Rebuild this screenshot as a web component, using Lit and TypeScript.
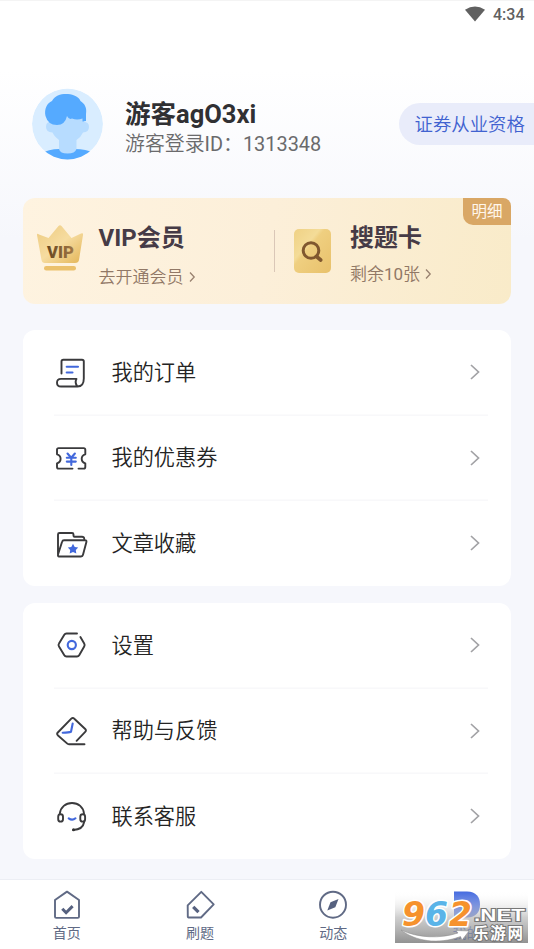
import { LitElement, html, css } from "lit";
import { customElement } from "lit/decorators.js";

const icons: Record<string, unknown> = {
  order: html`<svg viewBox="0 0 34 34"><g class="ink"><path d="M6.500 18.500V6.500q0-1.800 1.800-1.800H27q1.800 0 1.800 1.800V23.500q0 8-6.300 8H6q-4 0-4-3.800t4-3.800H21.500q-2 3.800 .8 7.400"/></g><g class="accent"><path d="M11.700 11.700H23M11.700 17.500h5.800"/></g></svg>`,
  coupon: html`<svg viewBox="0 0 34 34"><g class="ink"><path d="M17.500 27.600H3.600q-1.600 0-1.600-1.600V22.300q3.600-1 3.600-4.500t-3.600-4.500V8.700q0-1.600 1.600-1.600H28.700q1.600 0 1.600 1.600v4.600q-3.600 1-3.600 4.500t3.600 4.500V26q0 1.600-1.600 1.600h-5.200"/></g><g class="accent"><path d="M12.500 12.500l3.700 4.200 3.700-4.200M11.800 16.800h9M11.800 20.600h9M16.300 16.800v7.200"/></g></svg>`,
  folder: html`<svg viewBox="0 0 34 34"><g class="ink"><path d="M3 28.500V8.500q0-1.500 1.500-1.500H17q1.500 0 1.500 1.500v1.200q0 1 1 1h7.500q2 0 2.200 1.800M3 28.500L7 16q.5-1.700 2-1.700H30q1.800 0 1.400 1.600L28 28.800q-.4 1.700-2 1.700H4q-1.200 0-1-2"/></g><path fill="#4268dc" d="M18 17.800l1.700 3.100 3.500.6-2.400 2.500.5 3.500-3.300-1.600-3.300 1.600.5-3.500-2.400-2.500 3.500-.6z"/></svg>`,
  settings: html`<svg viewBox="0 0 34 34"><g class="ink"><path d="M22 5.500H11.500q-1.500 0-2.200 1.200L4 15.500q-1 1.500 0 3L9.300 27.300q.7 1.200 2.200 1.200H22q1.500 0 2.200-1.200l5-8.800q.9-1.500 0-3l-3.800-6.500"/></g><circle class="accent" cx="16.800" cy="17" r="4.100"/></svg>`,
  help: html`<svg viewBox="0 0 34 34"><g class="ink"><path d="M29.500 30.200H14q-1.200 0-2-.8L3 21.500q-1.700-1.400-.2-3L16.300 4.700q1.500-1.500 3 0L30.200 15q1.500 1.400 0 2.900l-8.600 8.900"/></g><path class="accent" d="M17.700 9.500L16 17.800q-2 .8-8.300 1"/></svg>`,
  service: html`<svg viewBox="0 0 34 34"><g class="ink"><path d="M4.800 14.500C5.700 8.200 10.500 4 17 4S28.300 8.200 29 14.500M29.300 22.500c-1 5.800-5.300 8.300-11 8.500"/><rect x="3.200" y="15.300" width="4.800" height="7.300" rx="2.400"/><rect x="25.300" y="15.300" width="4.800" height="7.300" rx="2.400"/></g><circle cx="18.500" cy="30.700" r="1.500" fill="#333"/><path class="accent" d="M13.700 19.300q3.500 2.700 6.800 0"/></svg>`,
  home: html`<svg viewBox="0 0 34 34"><g class="tab"><path d="M17 4.600L29 13V29.700q0 1.200-1.200 1.200H6.200q-1.200 0-1.200-1.200V13z"/></g><path d="M12.300 21.700l3.800 4 6.500-6.600" fill="none" stroke="#56617f" stroke-width="3"/></svg>`,
  quiz: html`<svg viewBox="0 0 34 34"><g class="tab"><path d="M4.700 18.400L18.300 4.800l12.400 12.500L18 30.500H5.600q-.8 0-.8-1z"/></g><path d="M10.200 19.800l5.300 5.400" fill="none" stroke="#56617f" stroke-width="3.200"/></svg>`,
  feed: html`<svg viewBox="0 0 34 34"><circle class="tab" cx="17" cy="17.700" r="13"/><path fill="#56617f" d="M22.500 12l-3.200 8.200-8 3.300 3.200-8.200z"/></svg>`,
  mine: html`<svg viewBox="0 0 34 34"><path fill="#4268df" d="M4 4.500H17C26 4.500 30 10 30 17.500S26 30.500 17 30.500H4z"/></svg>`,
};

const chevron = html`<svg class="chev" viewBox="0 0 12 18"><path d="M2 2l7.500 7L2 16" fill="none" stroke="#a2a2a5" stroke-width="1.700"/></svg>`;
const smallChevron = html`<svg class="small" viewBox="0 0 8 12"><path d="M2 1.500l4.200 4.500L2 10.500" fill="none" stroke="#98816f" stroke-width="1.300"/></svg>`;

@customElement("app-root")
export class AppRoot extends LitElement {
  static styles = css`
    :host {
      display: flex; flex-direction: column; position: relative; box-sizing: border-box;
      width: 534px; height: 949px; overflow: hidden; color: #303033;
      background: linear-gradient(#fff 0, #fff 70px, #f6f7fc 240px);
      font-family: Roboto, "Noto Sans CJK SC", sans-serif;
    }
    svg { display: block; flex: none; overflow: visible; }
    .ink, .accent, .tab { fill: none; stroke-linecap: round; stroke-linejoin: round; }
    .ink { stroke: #3a3a3c; stroke-width: 1.900; }
    .accent { stroke: #4268dc; stroke-width: 2.100; }
    .tab { stroke: #606a85; stroke-width: 1.900; }
    .status { height: 28px; display: flex; justify-content: flex-end; align-items: center; padding-right: 9.500px; gap: 8px; font-size: 16px; font-weight: 500; color: #606060; flex: none; box-sizing: border-box; border-top: 1px solid #f4f4f4; }
    .wifi { width: 20px; height: 16px; margin-top: -2px; }
    .profile { height: 170px; flex: none; display: flex; align-items: flex-start; padding: 60px 0 0 32px; box-sizing: border-box; }
    .avatar { width: 71px; height: 72px; margin-left: -.5px; }
    .who { margin: 11px 0 0 22.500px; flex: 1; white-space: nowrap; }
    .name { font-size: 25.500px; line-height: 30px; font-weight: 700; color: #303033; }
    .uid { font-size: 19.900px; line-height: 31px; color: #6a6a6c; font-weight: 350; }
    .uid b, .sub b { font-weight: 400; }
    .pill { width: 135px; height: 42px; margin-top: 15px; box-sizing: border-box; padding-left: 15.500px; border-radius: 21px 0 0 21px; background: #e9ecfa; color: #4062d0; font-size: 18.400px; line-height: 43px; white-space: nowrap; font-weight: 350; }
    .vip { position: relative; flex: none; height: 106px; margin: 0 23px; display: flex; border-radius: 12px; background: linear-gradient(100deg, #fef3e0, #fcefd9 50%, #f9ebc9); }
    .half { display: flex; flex: none; width: 250.500px; }
    .half.last { width: 236px; }
    .crown { width: 48px; height: 48px; margin: 26px 0 0 13px; }
    .card { width: 37px; height: 44px; margin: 31px 0 0 19px; }
    .copy { margin: 22px 0 0 14.500px; }
    .copy.right { margin-left: 19px; }
    .title { font-size: 24px; line-height: 36px; font-weight: 700; color: #463b46; white-space: nowrap; }
    .sub { display: flex; align-items: center; margin-top: 8px; font-size: 17px; line-height: 26px; color: #917866; white-space: nowrap; font-weight: 350; }
    .right .sub { margin-top: 5px; }
    .small { width: 8px; height: 12px; margin-left: 4px; }
    .rule { flex: none; width: 1.500px; height: 42px; margin-top: 32px; background: #dac7b7; }
    .tag { position: absolute; right: 0; top: 0; width: 48px; height: 27px; border-radius: 0 8px 0 10px; background: #d9a765; color: #fff7ec; font-size: 15.500px; line-height: 29px; text-align: center; }
    .menu { flex: none; height: 256px; margin: 26px 23px 0; border-radius: 12px; background: #fff; }
    .menu.next { margin-top: 17px; }
    .row { height: 85.600px; display: flex; align-items: center; margin: 0 23px 0 31px; box-shadow: inset 0 -1.500px #f8f8fa; font-size: 21.200px; line-height: 30px; font-weight: 350; color: #242424; }
    .row:last-child { box-shadow: none; }
    .row svg:first-child { width: 34px; height: 34px; margin: -1px 0 0 .6px; }
    .label { flex: 1; margin: 0 0 0 22.900px; }
    .chev { width: 12px; height: 18px; margin: -1px 7px 0 0; }
    .tabs { flex: none; height: 70px; box-sizing: border-box; margin-top: 20px; border-top: 1px solid #eceef4; background: #fff; display: grid; grid-template-columns: repeat(4, 133.300px); }
    .item { display: flex; flex-direction: column; align-items: center; padding-top: 7px; font-size: 14px; line-height: 20px; color: #606a85; }
    .item svg { width: 34px; height: 34px; margin-bottom: 2px; }
    .item.on { color: #4268df; }
    .mark { position: absolute; left: 395px; top: 891px; width: 133px; height: 52px; }
    .digits { font: italic 700 33px "DejaVu Sans", sans-serif; paint-order: stroke; stroke: #fff; stroke-width: 3px; stroke-linejoin: round; }
    .net { font: 700 17px "Liberation Sans", sans-serif; paint-order: stroke; stroke: #777; stroke-width: 2px; fill: #fff; }
    .site { font: 700 15.500px "Noto Sans CJK SC", sans-serif; paint-order: stroke; stroke: #777; stroke-width: 2px; fill: #fff; }
    .viptext { font: 900 17px Roboto, sans-serif; }
  `;

  private menu(rows: string[][], cls = "") {
    return html`<nav class="menu ${cls}">${rows.map(
      ([icon, text]) => html`<div class="row">${icons[icon]}<span class="label">${text}</span>${chevron}</div>`
    )}</nav>`;
  }

  render() {
    return html`
      <div class="status">
        <svg class="wifi" viewBox="0 0 20 16"><path fill="#606060" d="M0 3.800Q10-3 20 3.800L10 15.500z"/></svg>
        <span>4:34</span>
      </div>
      <header class="profile">
        <svg class="avatar" viewBox="0 0 71 72">
          <defs><clipPath id="round"><circle cx="35.500" cy="36" r="35.500"/></clipPath></defs>
          <g clip-path="url(#round)">
            <circle cx="35.500" cy="36" r="35.500" fill="#d9edff"/>
            <path fill="#55aaff" d="M8 66Q17 61 27 61H43Q54 61 62 65V72H8z"/>
            <path fill="#b7dcff" d="M19 22H52V34Q57 34 57 39T51 44.500Q49 49 44.500 52V61Q43 65.500 35.500 65.500T27 61V52Q22 48 20.500 44.500Q14 44 14 39T18 34z"/>
            <path fill="#55aaff" d="M13.500 28C12 21 15 15 20 13C23 7 30 5.500 36 6C42 6.500 47 9 48.500 13C53 16 55 20 54 26L54 33L50.500 33.500V30.500Q45 32.500 40 30.500Q37 32 35 28Q33 37 25 37Q16 37 13.500 28z"/>
          </g>
        </svg>
        <div class="who">
          <div class="name">游客agO3xi</div>
          <div class="uid">游客登录<b>ID</b>：<b>1313348</b></div>
        </div>
        <div class="pill">证券从业资格</div>
      </header>
      <section class="vip">
        <div class="half">
          <svg class="crown" viewBox="0 0 48 48">
            <defs><linearGradient id="gold" x2="1" y2="1"><stop stop-color="#edcb80"/><stop offset=".5" stop-color="#f6dca0"/><stop offset="1" stop-color="#e3b557"/></linearGradient>
            <linearGradient id="brown"><stop stop-color="#65451f"/><stop offset="1" stop-color="#a17846"/></linearGradient></defs>
            <path fill="url(#gold)" d="M1 11Q1 9 3 10.500L12.500 14L22.500 2Q24 .5 25.500 2L35.500 14L45 9.500Q47.500 8.500 47 11L43 36Q42.500 39 39 39H9Q6 39 5.500 36z"/>
            <rect x="8" y="42" width="32" height="4.500" rx="2.250" fill="#ebc16d"/>
            <text class="viptext" x="24.500" y="33.500" text-anchor="middle" textLength="27" lengthAdjust="spacingAndGlyphs" fill="url(#brown)">VIP</text>
          </svg>
          <div class="copy"><div class="title">VIP会员</div><div class="sub">去开通会员${smallChevron}</div></div>
        </div>
        <div class="rule"></div>
        <div class="half last">
          <svg class="card" viewBox="0 0 37 44">
            <defs><linearGradient id="plate" x2="1" y2="1"><stop stop-color="#efd184"/><stop offset=".35" stop-color="#f4dc98"/><stop offset=".42" stop-color="#efcf80"/><stop offset="1" stop-color="#e8c16b"/></linearGradient></defs>
            <rect width="37" height="44" rx="5" fill="url(#plate)"/>
            <g fill="none" stroke="#80582f" stroke-linecap="round"><circle cx="17" cy="21.500" r="7.800" stroke-width="3"/><path d="M22.500 27.500l4.200 3.500" stroke-width="3.600"/></g>
          </svg>
          <div class="copy right"><div class="title">搜题卡</div><div class="sub">剩余<b>10</b>张${smallChevron}</div></div>
        </div>
        <div class="tag">明细</div>
      </section>
      ${this.menu([["order", "我的订单"], ["coupon", "我的优惠券"], ["folder", "文章收藏"]])}
      ${this.menu([["settings", "设置"], ["help", "帮助与反馈"], ["service", "联系客服"]], "next")}
      <footer class="tabs">
        ${[["home", "首页"], ["quiz", "刷题"], ["feed", "动态"], ["mine", "我的"]].map(
          ([icon, text]) => html`<div class="item ${icon === "mine" ? "on" : ""}">${icons[icon]}<span>${text}</span></div>`
        )}
      </footer>
      <svg class="mark" viewBox="0 0 133 52">
        <defs><linearGradient id="shade" x2="0" y2="1"><stop stop-color="#fff" stop-opacity="0"/><stop offset=".25" stop-color="#ddd" stop-opacity=".35"/><stop offset=".5" stop-color="#bbb" stop-opacity=".7"/><stop offset="1" stop-color="#777" stop-opacity=".8"/></linearGradient></defs>
        <rect width="133" height="52" fill="url(#shade)"/>
        <g class="digits"><text x="7" y="35" fill="#f6922d">9</text><text x="30" y="35" fill="#5ab4e8">6</text><text x="54" y="35" fill="#f6922d">2</text></g>
        <path d="M6 39C23 47 45 48 63 42L61 39.500L74 40L67 49L65.500 45.500C43 54 20 50 6 39z" fill="#fff" stroke="#888" stroke-width=".5"/>
        <text class="net" x="79" y="29.500" textLength="51" lengthAdjust="spacingAndGlyphs">.NET</text>
        <text class="site" x="78" y="48" textLength="50" lengthAdjust="spacing">乐游网</text>
      </svg>
    `;
  }
}
